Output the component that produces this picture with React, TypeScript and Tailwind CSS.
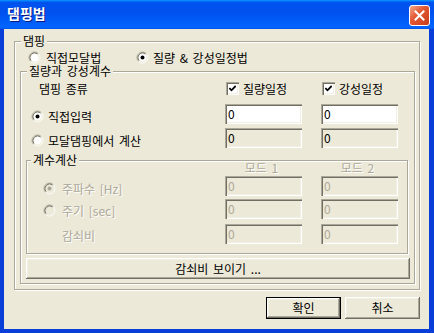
import React from 'react';

import classNames from 'clsx';

const SUNKEN = 'shadow-[inset_1px_1px_0_#aca899,inset_2px_2px_0_#716f64,inset_-1px_-1px_0_#fff,inset_-2px_-2px_0_#f1efe2]';
const RAISED = 'shadow-[inset_-1px_-1px_0_#716f64,inset_1px_1px_0_#fff,inset_-2px_-2px_0_#aca899,inset_2px_2px_0_#f1efe2]';
const DISABLED_TEXT = 'text-[#aca899] [text-shadow:1px_1px_0_#fff]';

const Radio = ({ checked, disabled }: { checked?: boolean; disabled?: boolean }) => (
  <svg width="13" height="13" viewBox="0 0 13 13" className="shrink-0">
    <circle cx="6.5" cy="6.5" r="4" fill={disabled ? '#ece9d8' : '#fff'} />
    <path d="M2.61 10.39A5.5 5.5 0 0 1 10.39 2.61" fill="none" stroke="#aca899" />
    <path d="M10.39 2.61A5.5 5.5 0 0 1 2.61 10.39" fill="none" stroke="#fff" />
    <path d="M3.32 9.68A4.5 4.5 0 0 1 9.68 3.32" fill="none" stroke="#716f64" />
    <path d="M9.68 3.32A4.5 4.5 0 0 1 3.32 9.68" fill="none" stroke="#f1efe2" />
    {checked && <circle cx="6.5" cy="6.5" r="2" fill={disabled ? '#aca899' : '#000'} />}
  </svg>
);

const Checkbox = () => (
  <span className={classNames('w-[13px] h-[13px] shrink-0 bg-white flex items-center justify-center', SUNKEN)}>
    <svg width="7" height="7" viewBox="0 0 7 7">
      <path d="M0.3 3L2.5 5.3L6.7 1" fill="none" stroke="#000" strokeWidth="1.8" />
    </svg>
  </span>
);

type EditKind = 'white' | 'gray' | 'disabled';

const Edit = ({ kind }: { kind: EditKind }) => (
  <div
    className={classNames(
      'w-[77px] h-[20px] flex items-center pl-[3px] leading-none',
      SUNKEN,
      kind === 'white' ? 'bg-white' : 'bg-[#ece9d8]',
      kind === 'disabled' ? 'text-[#aca899]' : 'text-black'
    )}
  >
    0
  </div>
);

interface GroupProps {
  label: string;
  className?: string;
  labelLeft?: string;
  children: React.ReactNode;
}

const Group = ({ label, className, labelLeft = 'left-[6px]', children }: GroupProps) => (
  <div className={classNames('relative border border-[#aca899] shadow-[inset_1px_1px_0_#fff,1px_1px_0_#fff]', className)}>
    <span className={classNames('absolute -top-[7px] px-[2px] bg-[#ece9d8] leading-[12px] whitespace-nowrap', labelLeft)}>
      {label}
    </span>
    {children}
  </div>
);

const CloseButton = () => (
  <div className="mt-[5px] ml-auto w-[21px] h-[21px] rounded-[3px] border border-white bg-[linear-gradient(135deg,#f3a98f,#e45a35_40%,#c83c1a)] flex items-center justify-center">
    <svg width="11" height="11" viewBox="0 0 11 11">
      <path d="M1.5 1.5L9.5 9.5M9.5 1.5L1.5 9.5" stroke="#fff" strokeWidth="2" strokeLinecap="square" />
    </svg>
  </div>
);

const EditPair = ({ kind }: { kind: EditKind }) => (
  <>
    <div className="w-[96px]">
      <Edit kind={kind} />
    </div>
    <Edit kind={kind} />
  </>
);

export default function App() {
  return (
    <div className="w-[434px] h-[333px] flex flex-col bg-[#0a3ed8] font-[family-name:'Noto_Sans_CJK_KR','Noto_Sans',sans-serif] text-[12px] [word-spacing:2px] text-black select-none">
      <div className="h-[29px] shrink-0 flex items-start pl-[7px] pr-[4px] bg-[linear-gradient(180deg,#0997ff,#0053ee_8%,#0050ee_40%,#0062fc_88%,#0066ff_94%,#0050e8)]">
        <span className="mt-[5px] text-[14px] leading-[17px] font-bold text-white [text-shadow:1px_1px_0_#0a1883]">댐핑법</span>
        <CloseButton />
      </div>

      <div className="flex-1 ml-[4px] mr-[5px] mb-[4px] bg-[#ece9d8] flex flex-col pl-[10px] pr-[9px] pt-[12px]">
        <Group label="댐핑" className="w-[406px]">
          <div className="flex items-center h-[13px] mt-[9px] pl-[13px] leading-[13px]">
            <div className="w-[108px] flex items-center gap-[5px]">
              <Radio />
              <span>직접모달법</span>
            </div>
            <div className="flex items-center gap-[4px]">
              <Radio checked />
              <span>질량 &amp; 강성일정법</span>
            </div>
          </div>

          <Group label="질량과 강성계수" className="mt-[7px] ml-[5px] mb-[5px] w-[395px] pt-[10px] pb-[4px]">
            <div className="flex items-center h-[13px] leading-[13px]">
              <span className="w-[204px] pl-[18px]">댐핑 종류</span>
              <div className="w-[96px] pl-[1px] flex items-center gap-[4px]">
                <Checkbox />
                <span>질량일정</span>
              </div>
              <div className="pl-[1px] flex items-center gap-[4px]">
                <Checkbox />
                <span>강성일정</span>
              </div>
            </div>

            <div className="flex h-[20px] mt-[9px]">
              <div className="w-[204px] pl-[10px] pt-[5px] flex items-center gap-[4px] leading-[13px]">
                <Radio checked />
                <span>직접입력</span>
              </div>
              <EditPair kind="white" />
            </div>

            <div className="flex h-[20px] mt-[4px]">
              <div className="w-[204px] pl-[10px] pt-[5px] flex items-center gap-[4px] leading-[13px]">
                <Radio />
                <span>모달댐핑에서 계산</span>
              </div>
              <EditPair kind="gray" />
            </div>

            <Group label="계수계산" labelLeft="left-[4px]" className="mt-[12px] ml-[5px] w-[382px] pt-[1px] pb-[9px]">
              <div className={classNames('flex h-[12px] leading-[12px]', DISABLED_TEXT)}>
                <div className="w-[198px]" />
                <div className="w-[96px]">
                  <div className="w-[73px] text-center">모드 1</div>
                </div>
                <div className="w-[73px] text-center">모드 2</div>
              </div>

              <div className="flex h-[20px] mt-[2px]">
                <div className={classNames('w-[198px] pl-[16px] pt-[5px] flex items-center gap-[6px] leading-[13px]', DISABLED_TEXT)}>
                  <Radio checked disabled />
                  <span>주파수 [Hz]</span>
                </div>
                <EditPair kind="disabled" />
              </div>

              <div className="flex h-[20px] mt-[3px]">
                <div className={classNames('w-[198px] pl-[16px] pt-[3px] flex items-center gap-[6px] leading-[13px]', DISABLED_TEXT)}>
                  <Radio disabled />
                  <span>주기 [sec]</span>
                </div>
                <EditPair kind="disabled" />
              </div>

              <div className="flex h-[20px] mt-[5px]">
                <div className={classNames('w-[198px] pl-[35px] pt-[3px] flex items-center leading-[13px]', DISABLED_TEXT)}>
                  <span>감쇠비</span>
                </div>
                <EditPair kind="disabled" />
              </div>
            </Group>

            <div className={classNames('mt-[4px] ml-[5px] w-[384px] h-[21px] flex items-center justify-center leading-none', RAISED)}>
              감쇠비 보이기 ...
            </div>
          </Group>
        </Group>

        <div className="mt-[7px] flex justify-end gap-[4px]">
          <div className="w-[75px] h-[22px] border border-black flex items-center justify-center leading-none">
            <div className={classNames('w-full h-full flex items-center justify-center', RAISED)}>확인</div>
          </div>
          <div className={classNames('w-[75px] h-[22px] flex items-center justify-center leading-none', RAISED)}>취소</div>
        </div>
      </div>
    </div>
  );
}
